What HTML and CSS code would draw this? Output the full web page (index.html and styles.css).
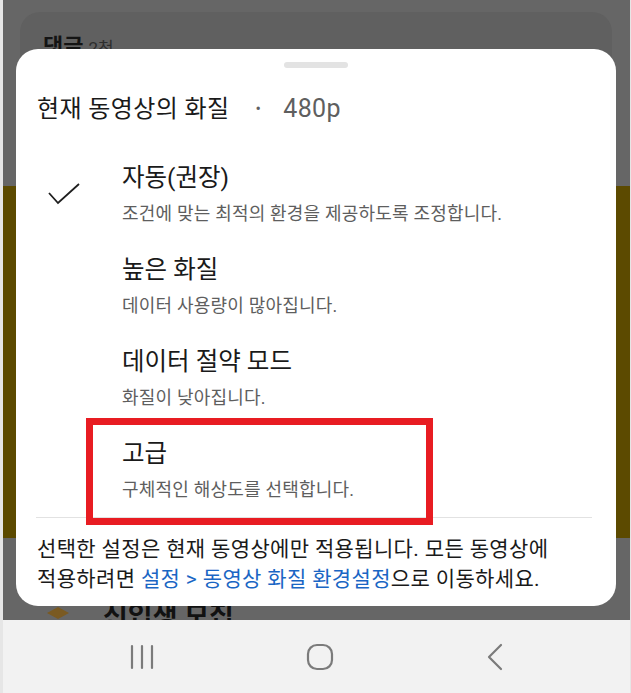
FILE: index.html
```html
<!DOCTYPE html>
<html lang="ko">
<head>
<meta charset="utf-8">
<link rel="stylesheet" href="styles.css">
</head>
<body>
<div class="screen">
  <div class="app">
    <div class="top-area">
      <div class="comments-card">
        <span class="c-title">댓글</span><span class="c-count">2천</span>
      </div>
    </div>
    <div class="olive-band"></div>
    <div class="under-area">
      <div class="under-item">
        <svg class="under-icon" width="26" height="20" viewBox="0 0 26 20"><path d="M2 8 L13 2 L24 8 L13 14 Z" fill="#7a5a22"/></svg>
        <span class="under-text">신입생 모집</span>
      </div>
    </div>
    <div class="nav-bar">
      <svg width="26" height="28" viewBox="0 0 26 28"><g stroke="#7b7b7b" stroke-width="2.2" stroke-linecap="round"><line x1="3" y1="3" x2="3" y2="25"/><line x1="13" y1="3" x2="13" y2="25"/><line x1="23" y1="3" x2="23" y2="25"/></g></svg>
      <svg width="28" height="28" viewBox="0 0 28 28"><rect x="2" y="2" width="24" height="24" rx="9" fill="none" stroke="#7b7b7b" stroke-width="2.2"/></svg>
      <svg width="20" height="30" viewBox="0 0 20 30"><polyline points="16,3 4,15 16,27" fill="none" stroke="#7b7b7b" stroke-width="2.2" stroke-linecap="round" stroke-linejoin="round"/></svg>
    </div>
  </div>

  <div class="sheet">
    <div class="handle"></div>
    <div class="sheet-title">현재 동영상의 화질<span class="dot">•</span><span class="res">480p</span></div>
    <div class="options">
      <div class="option">
        <svg class="check" width="34" height="24" viewBox="0 0 34 24"><polyline points="2,11 11,21 32,2" fill="none" stroke="#1f1f1f" stroke-width="1.8"/></svg>
        <div class="opt-title">자동(권장)</div>
        <div class="opt-sub">조건에 맞는 최적의 환경을 제공하도록 조정합니다.</div>
      </div>
      <div class="option">
        <div class="opt-title">높은 화질</div>
        <div class="opt-sub">데이터 사용량이 많아집니다.</div>
      </div>
      <div class="option">
        <div class="opt-title">데이터 절약 모드</div>
        <div class="opt-sub">화질이 낮아집니다.</div>
      </div>
      <div class="option">
        <div class="highlight"></div>
        <div class="opt-title">고급</div>
        <div class="opt-sub">구체적인 해상도를 선택합니다.</div>
      </div>
    </div>
    <div class="divider"></div>
    <p class="footer">선택한 설정은 현재 동영상에만 적용됩니다. 모든 동영상에<br>적용하려면 <span class="link">설정 &gt; 동영상 화질 환경설정</span>으로 이동하세요.</p>
  </div>
</div>
</body>
</html>
```

FILE: styles.css
```css
* { box-sizing: border-box; }
html, body { margin: 0; padding: 0; }
body {
  width: 631px;
  height: 693px;
  overflow: hidden;
  font-family: Roboto, "Noto Sans CJK KR", sans-serif;
  background: #e6e6e6;
}
.screen {
  position: relative;
  width: 631px;
  height: 693px;
  overflow: hidden;
}
.app {
  display: flex;
  flex-direction: column;
  height: 100%;
  margin-left: 3px;
  margin-right: 1px;
}
.top-area {
  height: 186px;
  background: #666666;
  padding: 12px 18px 0 17px;
}
.comments-card {
  height: 174px;
  background: #606060;
  border-radius: 20px 20px 0 0;
  padding: 16px 0 0 23px;
  display: flex;
  align-items: baseline;
  gap: 5px;
}
.c-title {
  font-size: 22px;
  font-weight: 700;
  color: #141414;
}
.c-count {
  font-size: 17px;
  color: #2e2e2e;
}
.olive-band {
  height: 352px;
  background: #5c4a00;
}
.under-area {
  height: 82px;
  background: #666666;
  padding: 57px 0 0 42px;
}
.under-item {
  display: flex;
  align-items: center;
  gap: 32px;
}
.under-text {
  font-size: 27px;
  font-weight: 700;
  color: #111;
}
.nav-bar {
  flex: 1;
  background: #f2f2f2;
  display: flex;
  align-items: center;
  justify-content: space-between;
  padding: 0 125px 0 126px;
}
.sheet {
  position: absolute;
  left: 16px;
  top: 49px;
  width: 600px;
  height: 557px;
  background: #ffffff;
  border-radius: 22px;
  padding: 13px 0 0 0;
}
.handle {
  width: 64px;
  height: 6px;
  border-radius: 3px;
  background: #e3e3e3;
  margin: 0 auto;
}
.sheet-title {
  margin: 26px 0 0 21px;
  font-size: 24px;
  letter-spacing: 0.4px;
  line-height: 30px;
  color: #1a1a1a;
  display: flex;
  align-items: center;
}
.dot {
  color: #606060;
  font-size: 16px;
  margin: 0 22px 0 26px;
}
.res {
  color: #5f5f5f;
  font-size: 25px;
  letter-spacing: 0.3px;
}
.options {
  margin-top: 25px;
}
.option {
  position: relative;
  height: 92px;
  padding: 14px 0 0 106px;
}
.check {
  position: absolute;
  left: 31px;
  top: 33px;
}
.opt-title {
  font-size: 24.5px;
  line-height: 30px;
  color: #1a1a1a;
}
.opt-sub {
  margin-top: 10px;
  font-size: 18px;
  letter-spacing: 0.2px;
  line-height: 22px;
  color: #5e5e5e;
}
.highlight {
  position: absolute;
  left: 70px;
  top: -7px;
  width: 347px;
  height: 107px;
  border: 7px solid #e81c22;
}
.divider {
  height: 1px;
  background: #e2e2e2;
  margin: 0 24px 0 20px;
}
.footer {
  margin: 16px 0 0 21px;
  font-size: 21px;
  letter-spacing: 0.35px;
  line-height: 30px;
  color: #1a1a1a;
}
.link {
  color: #1a66c4;
}
```
